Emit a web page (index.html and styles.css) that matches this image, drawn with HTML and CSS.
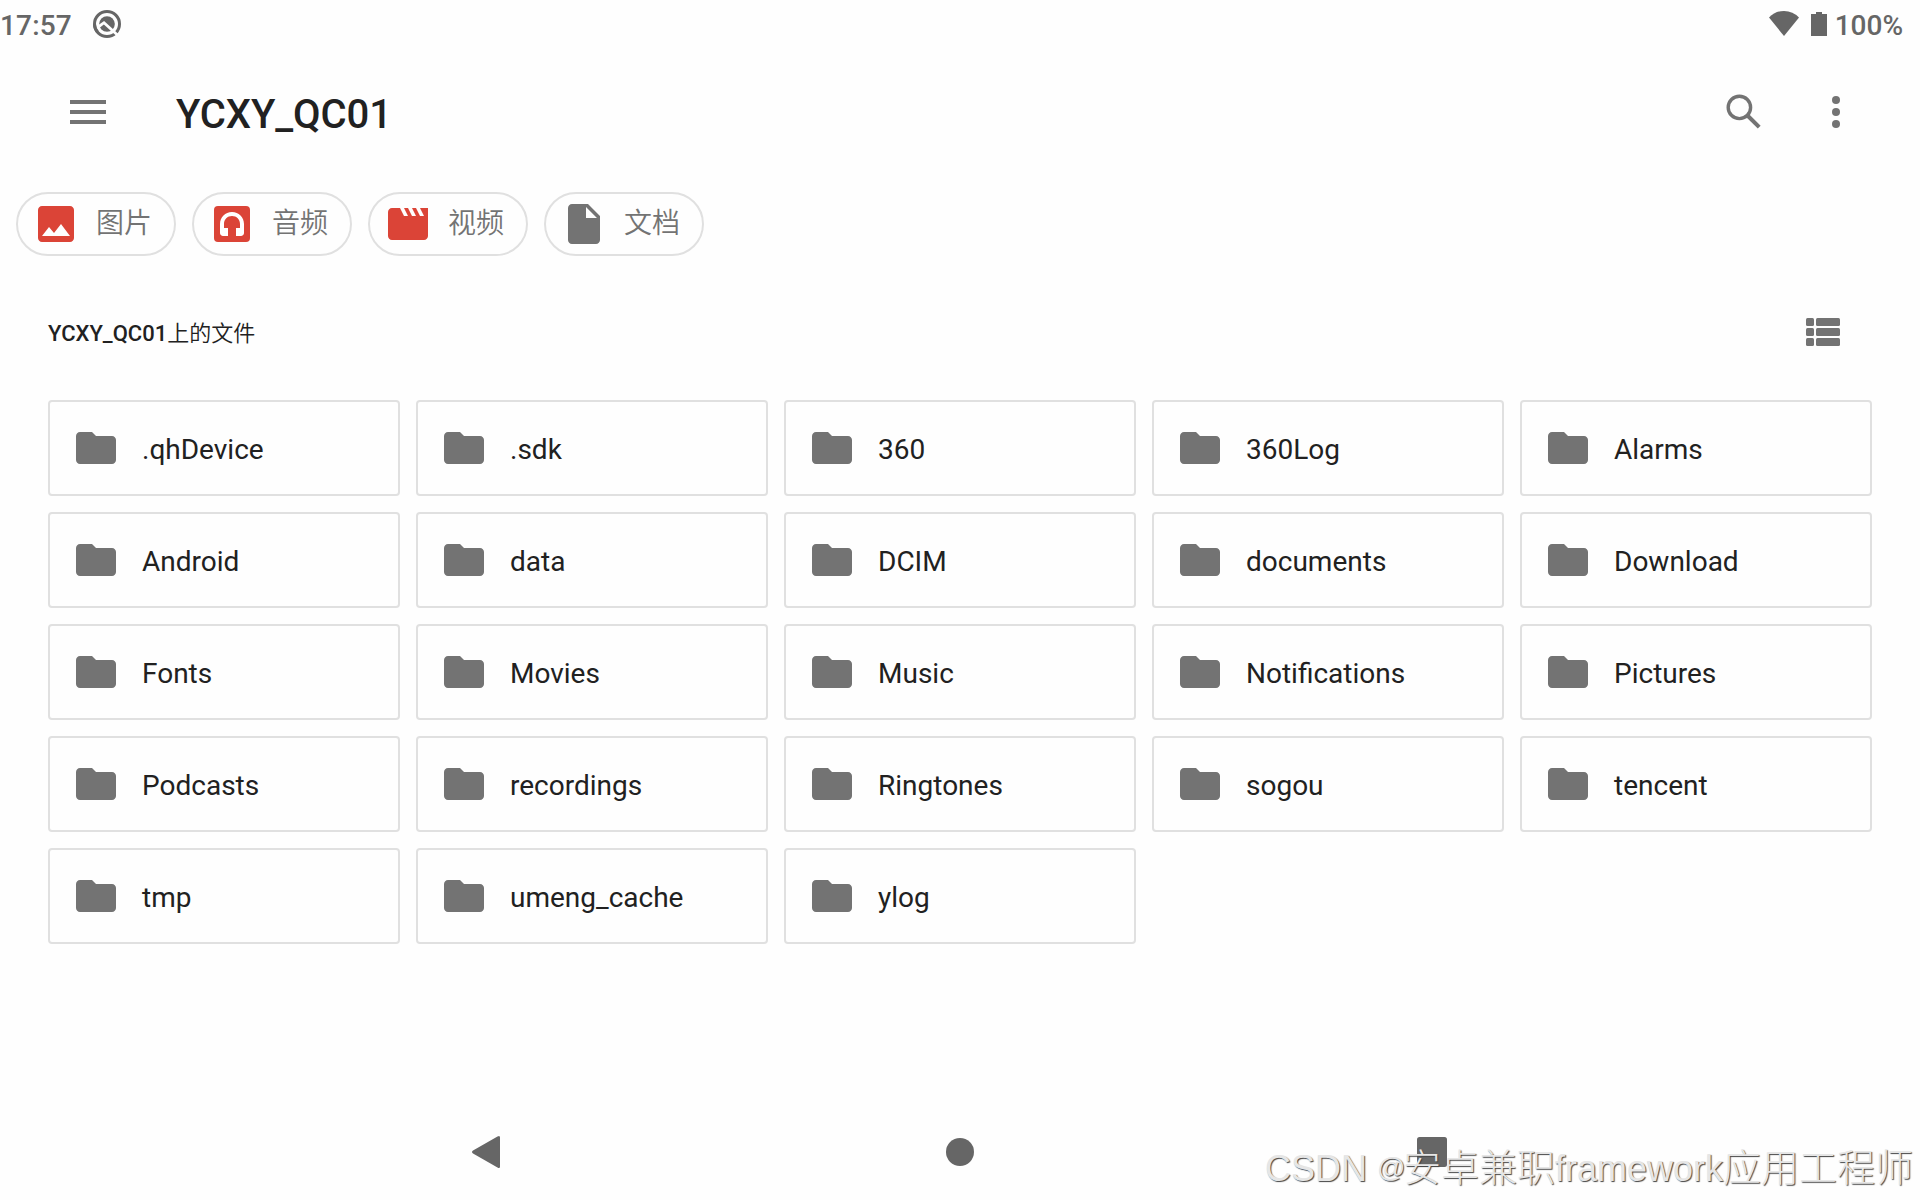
FILE: index.html
```html
<!DOCTYPE html>
<html lang="zh-CN">
<head>
<meta charset="utf-8">
<title>YCXY_QC01</title>
<link rel="stylesheet" href="styles.css">
</head>
<body>
<svg class="defs" width="0" height="0" aria-hidden="true">
  <symbol id="folder" viewBox="0 0 24 24"><path d="M10 4H4c-1.1 0-1.99.9-1.99 2L2 18c0 1.1.9 2 2 2h16c1.1 0 2-.9 2-2V8c0-1.1-.9-2-2-2h-8l-2-2z"/></symbol>
</svg>
<div class="status">
  <div class="status-left">
    <span class="clock">17:57</span>
    <svg class="status-badge" viewBox="0 0 28 28"><circle cx="14" cy="14" r="12.500" fill="none" stroke="#666" stroke-width="3"/><circle cx="14" cy="14" r="7.800"/><path d="M4.500 17.500L11 12.700L25 25.500" fill="none" stroke="#fefefe" stroke-width="2.800"/><path d="M1.500 14A12.500 12.500 0 0 0 4.500 22" fill="none" stroke="#666" stroke-width="3"/></svg>
  </div>
  <div class="status-right">
    <svg class="wifi" viewBox="0 0 30 25"><path d="M15 25L0 6.600Q6 0 15 0T30 6.600Z"/></svg>
    <svg class="battery" viewBox="0 0 16 24"><path d="M5 0H11V2H16V24H0V2H5Z"/></svg>
    <span>100%</span>
  </div>
</div>
<header class="toolbar">
  <svg class="icon" viewBox="0 0 24 24"><path d="M3 18h18v-2H3v2zm0-5h18v-2H3v2zm0-7v2h18V6H3z"/></svg>
  <h1>YCXY_QC01</h1>
  <svg class="icon" viewBox="0 0 24 24"><circle cx="9.700" cy="9.700" r="5.600" fill="none" stroke="#737373" stroke-width="1.700"/><path d="M14 14L19.600 19.600" stroke="#737373" stroke-width="2"/></svg>
  <svg class="icon more" viewBox="0 0 24 24"><circle cx="12" cy="6" r="2"/><circle cx="12" cy="12" r="2"/><circle cx="12" cy="18" r="2"/></svg>
</header>
<nav class="chips">
  <div class="chip"><svg class="icon red" viewBox="0 0 24 24"><path d="M21 19V5c0-1.100-.9-2-2-2H5c-1.100 0-2 .9-2 2v14c0 1.100.9 2 2 2h14c1.100 0 2-.9 2-2zM8.500 13.500l2.500 3.010L14.500 12l4.500 6H5l3.500-4.500z"/></svg><span>图片</span></div>
  <div class="chip"><svg class="icon red" viewBox="0 0 24 24"><rect x="3" y="3" width="18" height="18" rx="2"/><path class="cut" d="M12 6c-3.400 0-6 2.600-6 6v4.500c0 .8.700 1.500 1.500 1.500H10v-4H8v-2c0-2.300 1.700-4 4-4s4 1.700 4 4v2h-2v4h2.500c.8 0 1.500-.7 1.500-1.500V12c0-3.400-2.600-6-6-6z"/></svg><span>音频</span></div>
  <div class="chip"><svg class="icon red" viewBox="0 0 24 24"><path d="M18 4l2 4h-2l-2-4h-2l2 4h-2l-2-4h-2l2 4h-2L8 4H5.500L7.500 8L5.500 4H4c-1.100 0-1.990.9-1.990 2L2 18c0 1.100.9 2 2 2h16c1.100 0 2-.9 2-2V4h-4z"/></svg><span>视频</span></div>
  <div class="chip"><svg class="icon" viewBox="0 0 24 24"><path d="M6 2c-1.100 0-1.990.9-1.990 2L4 20c0 1.100.890 2 1.990 2H18c1.100 0 2-.9 2-2V8l-6-6H6zm7 7V3.500L18.500 9H13z"/></svg><span>文档</span></div>
</nav>
<div class="section">
  <h2>YCXY_QC01<span>上的文件</span></h2>
  <svg class="view" viewBox="0 0 34 28"><rect width="8" height="8" rx="1.500"/><rect x="10" width="24" height="8" rx="1.500"/><rect y="10" width="8" height="8" rx="1.500"/><rect x="10" y="10" width="24" height="8" rx="1.500"/><rect y="20" width="8" height="8" rx="1.500"/><rect x="10" y="20" width="24" height="8" rx="1.500"/></svg>
</div>
<main class="grid">
  <div class="card"><svg class="icon"><use href="#folder"/></svg><span>.qhDevice</span></div>
  <div class="card"><svg class="icon"><use href="#folder"/></svg><span>.sdk</span></div>
  <div class="card"><svg class="icon"><use href="#folder"/></svg><span>360</span></div>
  <div class="card"><svg class="icon"><use href="#folder"/></svg><span>360Log</span></div>
  <div class="card"><svg class="icon"><use href="#folder"/></svg><span>Alarms</span></div>
  <div class="card"><svg class="icon"><use href="#folder"/></svg><span>Android</span></div>
  <div class="card"><svg class="icon"><use href="#folder"/></svg><span>data</span></div>
  <div class="card"><svg class="icon"><use href="#folder"/></svg><span>DCIM</span></div>
  <div class="card"><svg class="icon"><use href="#folder"/></svg><span>documents</span></div>
  <div class="card"><svg class="icon"><use href="#folder"/></svg><span>Download</span></div>
  <div class="card"><svg class="icon"><use href="#folder"/></svg><span>Fonts</span></div>
  <div class="card"><svg class="icon"><use href="#folder"/></svg><span>Movies</span></div>
  <div class="card"><svg class="icon"><use href="#folder"/></svg><span>Music</span></div>
  <div class="card"><svg class="icon"><use href="#folder"/></svg><span>Notifications</span></div>
  <div class="card"><svg class="icon"><use href="#folder"/></svg><span>Pictures</span></div>
  <div class="card"><svg class="icon"><use href="#folder"/></svg><span>Podcasts</span></div>
  <div class="card"><svg class="icon"><use href="#folder"/></svg><span>recordings</span></div>
  <div class="card"><svg class="icon"><use href="#folder"/></svg><span>Ringtones</span></div>
  <div class="card"><svg class="icon"><use href="#folder"/></svg><span>sogou</span></div>
  <div class="card"><svg class="icon"><use href="#folder"/></svg><span>tencent</span></div>
  <div class="card"><svg class="icon"><use href="#folder"/></svg><span>tmp</span></div>
  <div class="card"><svg class="icon"><use href="#folder"/></svg><span>umeng_cache</span></div>
  <div class="card"><svg class="icon"><use href="#folder"/></svg><span>ylog</span></div>
</main>
<footer class="navbar">
  <svg viewBox="0 0 40 40"><path d="M32 5.500V34.500Q32 37 29.500 35.500L5 21.500Q3 20 5 18.500L29.500 4.500Q32 3 32 5.500Z"/></svg>
  <svg viewBox="0 0 40 40"><circle cx="20" cy="20" r="14"/></svg>
  <svg viewBox="0 0 40 40"><rect x="5" y="5" width="30" height="30" rx="2.500"/></svg>
</footer>
<div class="watermark"><span class="wm-latin">CSDN </span><span class="wm-at">@</span>安卓兼职<span class="wm-latin">framework</span>应用工程师</div>
</body>
</html>
```
FILE: styles.css
```css
* { box-sizing: border-box; }
body {
  margin: 0;
  width: 1920px;
  height: 1200px;
  overflow: hidden;
  position: relative;
  display: flex;
  flex-direction: column;
  background: #fefefe;
  color: #212121;
  font-family: Roboto, "Noto Sans CJK SC", sans-serif;
}
svg { display: block; flex: none; fill: #666; }
.defs { position: absolute; }
.icon { width: 48px; height: 48px; fill: #737373; }
.red { fill: #db4437; }
.cut { fill: #fff; }

.status {
  height: 48px;
  display: flex;
  justify-content: space-between;
  padding: 0 17px 0 0;
  font-size: 28px;
  font-weight: 480;
  line-height: 52px;
  color: #666;
}
.status-left, .status-right { display: flex; }
.clock { width: 93px; letter-spacing: 0.15px; }
.status-badge { width: 28px; height: 28px; margin-top: 10px; }
.wifi { width: 30px; height: 25px; margin: 11px 12px 0 0; }
.battery { width: 16px; height: 24px; margin: 12px 8px 0 0; }

.toolbar {
  height: 128px;
  display: flex;
  align-items: center;
  padding: 0 60px 0 64px;
}
h1 {
  flex: 1;
  margin: 6px 0 0 64px;
  font-size: 40px;
  font-weight: 500;
  line-height: 48px;
  letter-spacing: -0.1px;
}
.more { margin-left: 44px; }

.chips { display: flex; gap: 16px; padding: 16px; }
.chip {
  width: 160px;
  height: 64px;
  display: flex;
  align-items: center;
  gap: 16px;
  padding-left: 14px;
  border: 2px solid #e0e0e0;
  border-radius: 32px;
  font-size: 28px;
  font-weight: 350;
  line-height: 40px;
  color: #737373;
}
.chip span { margin-top: -6px; font-family: "Noto Sans CJK SC", sans-serif; }

.section {
  height: 120px;
  display: flex;
  align-items: center;
  justify-content: space-between;
  padding: 0 80px 0 48px;
}
h2 { margin: 3px 0 0; font-size: 22px; font-weight: 500; line-height: 32px; }
h2 span { font-weight: 350; }
.view { width: 34px; height: 28px; fill: #737373; }

.grid {
  display: grid;
  grid-template-columns: repeat(5, 352px);
  grid-auto-rows: 96px;
  gap: 16px;
  padding: 8px 48px 0;
}
.card {
  display: flex;
  align-items: center;
  padding-left: 22px;
  gap: 22px;
  border: 2px solid #e0e0e0;
  border-radius: 4px;
  font-size: 28px;
  line-height: 36px;
}
.card span { margin-top: 4px; }

.navbar {
  height: 96px;
  margin-top: auto;
  display: flex;
  justify-content: space-between;
  align-items: center;
  padding: 0 468px;
}
.navbar svg { width: 40px; height: 40px; }

.watermark {
  position: absolute;
  left: 1265px;
  top: 1141px;
  font-family: "Liberation Sans", "Noto Sans CJK SC", sans-serif;
  font-size: 38px;
  font-weight: 300;
  line-height: 54px;
  white-space: nowrap;
  color: #e6e6e6;
  text-shadow: 1px 1px 1px #444;
}
.wm-latin { font-size: 36px; }
.wm-at { font-size: 28px; line-height: 1; vertical-align: 4px; letter-spacing: -2.5px; }
```
